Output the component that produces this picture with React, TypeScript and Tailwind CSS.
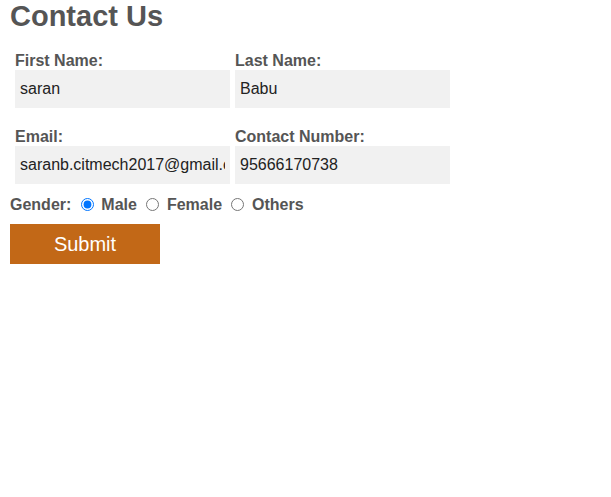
import { useState } from 'react'

const field =
  "h-[38px] w-[215px] bg-[#f1f1f1] px-[5px] text-[16px] text-[#222] outline-none"

export default function App() {
  const [gender, setGender] = useState('male')

  return (
    <div className="min-h-screen bg-white px-[10px] font-['Liberation_Sans',Arial,sans-serif] text-[#555]">
      <h1 className="text-[29px] font-bold leading-[32px]">Contact Us</h1>

      {/* name row */}
      <div className="mt-[19px] flex gap-[5px] pl-[5px]">
        <div className="flex flex-col">
          <label className="text-[16px] font-bold leading-[19px]">First Name:</label>
          <input className={field} defaultValue="saran" />
        </div>
        <div className="flex flex-col">
          <label className="text-[16px] font-bold leading-[19px]">Last Name:</label>
          <input className={field} defaultValue="Babu" />
        </div>
      </div>

      {/* contact row */}
      <div className="mt-[19px] flex gap-[5px] pl-[5px]">
        <div className="flex flex-col">
          <label className="text-[16px] font-bold leading-[19px]">Email:</label>
          <input className={field} defaultValue="saranb.citmech2017@gmail.com" />
        </div>
        <div className="flex flex-col">
          <label className="text-[16px] font-bold leading-[19px]">Contact Number:</label>
          <input className={field} defaultValue="95666170738" />
        </div>
      </div>

      {/* gender */}
      <div className="mt-[11px] flex h-[19px] items-center text-[16px] font-bold leading-[19px]">
        <span>Gender:</span>
        <input
          type="radio"
          name="gender"
          className="ml-[10px] h-[13px] w-[13px]"
          checked={gender === 'male'}
          onChange={() => setGender('male')}
        />
        <span className="ml-[7px]">Male</span>
        <input
          type="radio"
          name="gender"
          className="ml-[9px] h-[13px] w-[13px]"
          checked={gender === 'female'}
          onChange={() => setGender('female')}
        />
        <span className="ml-[8px]">Female</span>
        <input
          type="radio"
          name="gender"
          className="ml-[9px] h-[13px] w-[13px]"
          checked={gender === 'others'}
          onChange={() => setGender('others')}
        />
        <span className="ml-[8px]">Others</span>
      </div>

      <button className="mt-[10px] h-[40px] w-[150px] bg-[#c26817] text-[20px] text-white">
        Submit
      </button>
    </div>
  )
}
